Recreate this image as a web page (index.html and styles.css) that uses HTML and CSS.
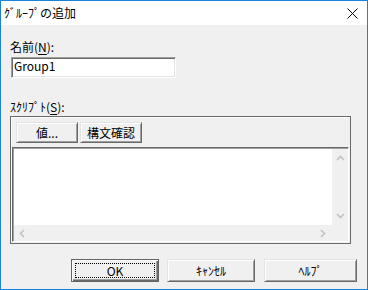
FILE: index.html
```html
<!DOCTYPE html>
<html lang="ja">
<head>
<meta charset="utf-8">
<title>ｸﾞﾙｰﾌﾟの追加</title>
<link rel="stylesheet" href="styles.css">
</head>
<body>
<div class="window">
  <div class="titlebar">
    <span class="title">ｸﾞﾙｰﾌﾟの追加</span>
    <svg class="close" width="11" height="11" viewBox="0 0 11 11"><path d="M0.5 0.5L10.5 10.5M10.5 0.5L0.5 10.5" stroke="#000" stroke-width="1" fill="none"/></svg>
  </div>
  <div class="client">
    <div class="lbl lbl-name">名前(<u>N</u>):</div>
    <div class="textbox">Group1</div>
    <div class="lbl lbl-script">ｽｸﾘﾌﾟﾄ(<u>S</u>):</div>
    <div class="frame">
      <div class="toolrow">
        <div class="btn small">値...</div>
        <div class="btn small">構文確認</div>
      </div>
      <div class="edit">
        <div class="edit-area"></div>
        <div class="vscroll">
          <svg width="9" height="6" viewBox="0 0 9 6"><path d="M1 5L4.5 1.5L8 5" stroke="#c2c2c2" stroke-width="1.6" fill="none"/></svg>
          <svg width="9" height="6" viewBox="0 0 9 6"><path d="M1 1L4.5 4.5L8 1" stroke="#c2c2c2" stroke-width="1.6" fill="none"/></svg>
        </div>
        <div class="hscroll">
          <svg width="6" height="9" viewBox="0 0 6 9"><path d="M5 1L1.5 4.5L5 8" stroke="#c2c2c2" stroke-width="1.6" fill="none"/></svg>
          <svg width="6" height="9" viewBox="0 0 6 9"><path d="M1 1L4.5 4.5L1 8" stroke="#c2c2c2" stroke-width="1.6" fill="none"/></svg>
        </div>
        <div class="corner"></div>
      </div>
    </div>
    <div class="buttons">
      <div class="btn big default">OK</div>
      <div class="btn big">ｷｬﾝｾﾙ</div>
      <div class="btn big help">ﾍﾙﾌﾟ</div>
    </div>
  </div>
</div>
</body>
</html>
```
FILE: styles.css
```css
* { box-sizing: border-box; }
html, body { margin: 0; padding: 0; }
body {
  width: 368px;
  height: 290px;
  overflow: hidden;
  font-family: "Noto Sans CJK JP", sans-serif;
  font-size: 12px;
  color: #000;
  background: #f0f0f0;
}
.window {
  width: 368px;
  height: 290px;
  border: 1px solid #1883d7;
  background: #f0f0f0;
  display: flex;
  flex-direction: column;
}
.titlebar {
  height: 24px;
  flex: none;
  background: #fff;
  display: flex;
  align-items: center;
  justify-content: space-between;
  padding: 0 9px 0 3px;
}
.title { line-height: 14px; }
.close { display: block; }
.client {
  flex: 1;
  padding-left: 9px;
  display: flex;
  flex-direction: column;
  align-items: flex-start;
}
.lbl { line-height: 14px; }
.lbl u { text-decoration-thickness: 1px; text-underline-offset: 2px; }
.lbl-name { margin-top: 15px; }
.textbox {
  margin: 3px 0 0 1px;
  width: 165px;
  height: 21px;
  background: #fff;
  border: 1px solid;
  border-color: #a0a0a0 #fff #fff #a0a0a0;
  box-shadow: inset 1px 1px #696969, inset -1px -1px #e3e3e3;
  padding: 1px 0 0 2px;
  line-height: 14px;
}
.lbl-script { margin-top: 22px; }
.frame {
  margin-top: 2px;
  width: 341px;
  height: 128px;
  border: 1px solid #696969;
  box-shadow: inset 1px 1px #fff;
  display: flex;
  flex-direction: column;
  padding-top: 5px;
}
.toolrow {
  display: flex;
  gap: 2px;
  padding-left: 5px;
}
.btn {
  display: flex;
  align-items: center;
  justify-content: center;
  background: #f0f0f0;
  border: 1px solid;
  border-color: #e3e3e3 #696969 #696969 #e3e3e3;
  box-shadow: inset 1px 1px #fff, inset -1px -1px #a0a0a0;
  line-height: 14px;
}
.small { width: 62px; height: 21px; }
.edit {
  flex: 1;
  margin: 4px 1px 1px 1px;
  border: 1px solid;
  border-color: #696969 #fff #fff #696969;
  padding: 1px 0 0 1px;
  background: #a0a0a0;
  display: grid;
  grid-template-columns: 1fr 16px;
  grid-template-rows: 1fr 16px;
}
.edit-area { background: #fff; }
.vscroll {
  background: #f0f0f0;
  display: flex;
  flex-direction: column;
  justify-content: space-between;
  align-items: center;
  padding: 6px 0 6px;
}
.hscroll {
  background: #f0f0f0;
  display: flex;
  justify-content: space-between;
  align-items: center;
  padding: 0 6px 0 5px;
}
.vscroll svg, .hscroll svg { display: block; }
.corner { background: #f0f0f0; }
.buttons {
  margin: 15px 0 0 61px;
  display: flex;
  gap: 8px;
}
.big { width: 88px; height: 23px; }
.help { margin-left: 1px; width: 93px; }
.default {
  border-color: #646464;
  box-shadow: inset 1px 1px #fff, inset -1px -1px #696969, inset -2px -2px #a0a0a0;
  outline: 1px dotted #000;
  outline-offset: -5px;
}
```
